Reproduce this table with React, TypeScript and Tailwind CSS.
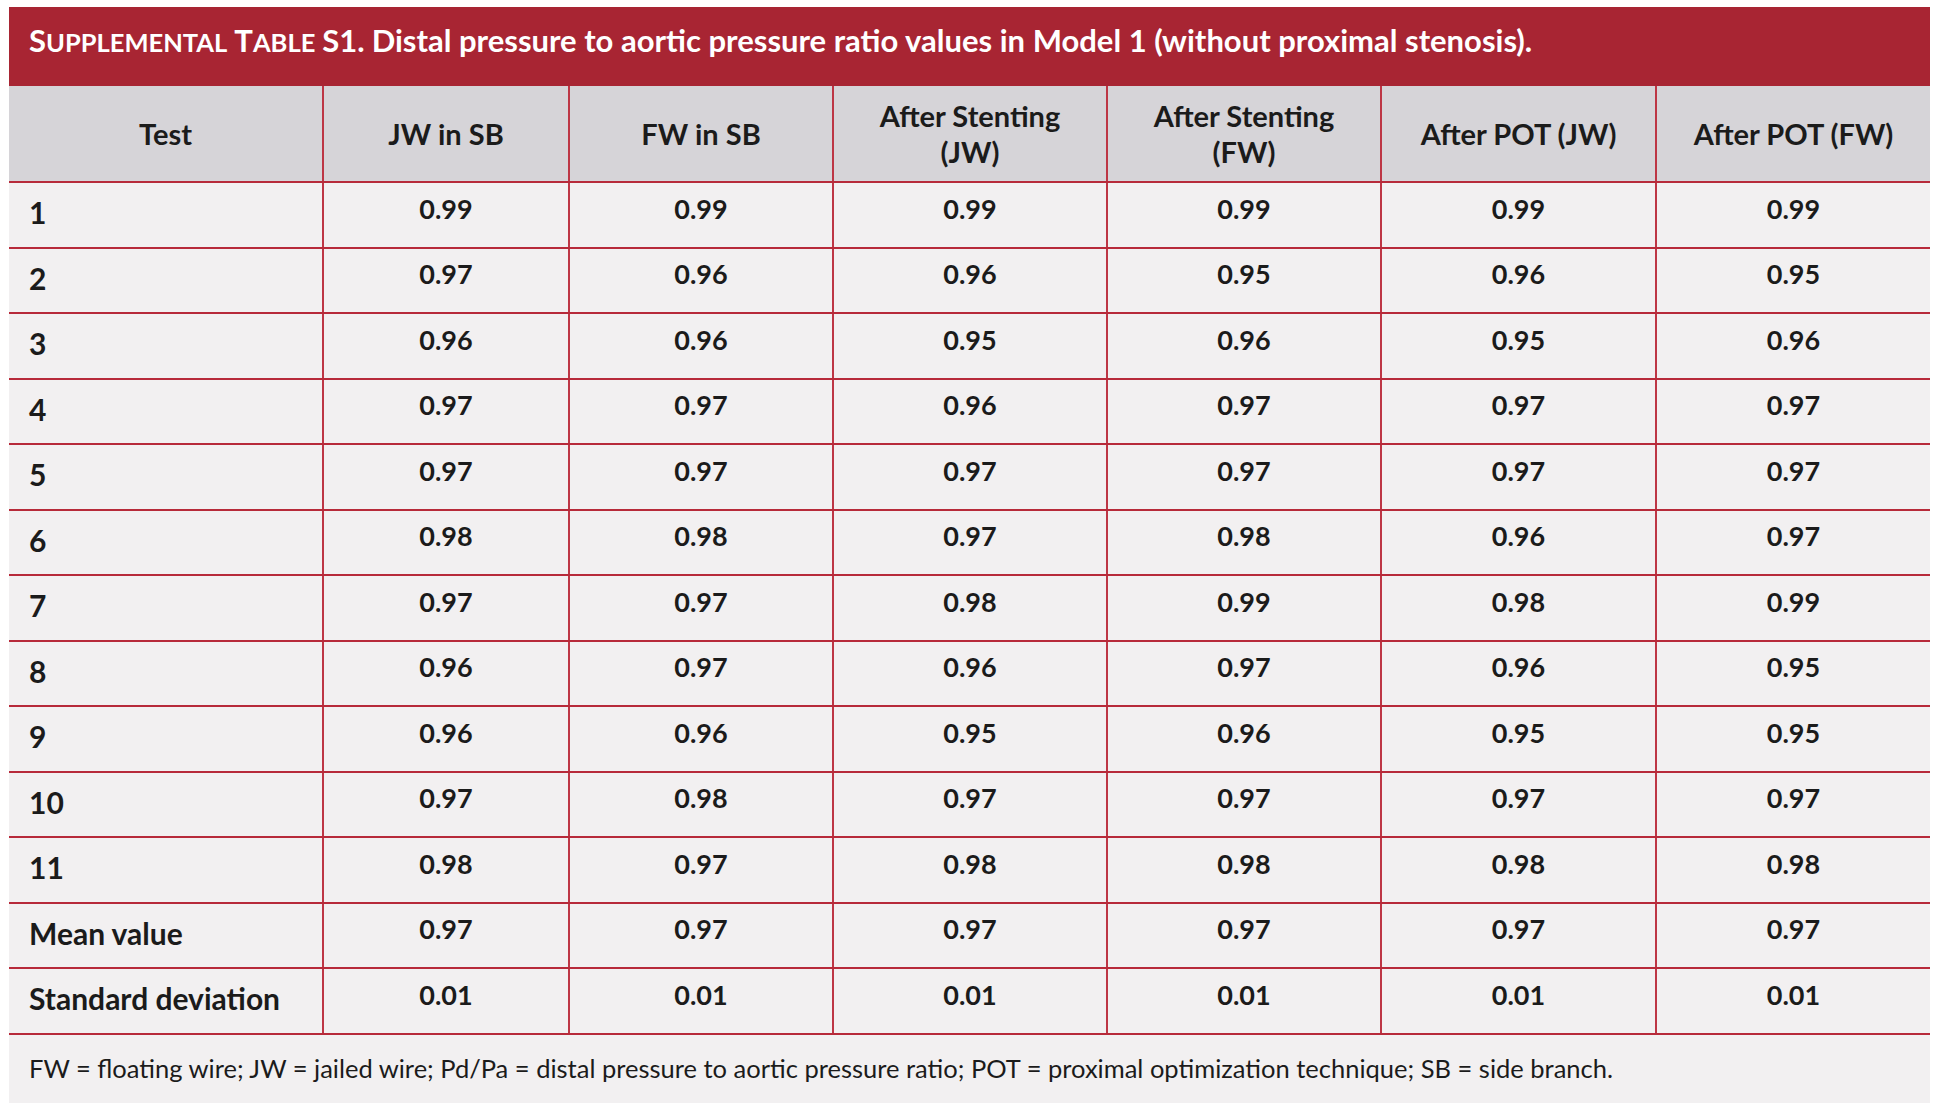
const COLUMNS = [
	"Test",
	"JW in SB",
	"FW in SB",
	"After Stenting (JW)",
	"After Stenting (FW)",
	"After POT (JW)",
	"After POT (FW)",
];

const ROWS: { label: string; values: string[] }[] = [
	{ label: "1", values: ["0.99", "0.99", "0.99", "0.99", "0.99", "0.99"] },
	{ label: "2", values: ["0.97", "0.96", "0.96", "0.95", "0.96", "0.95"] },
	{ label: "3", values: ["0.96", "0.96", "0.95", "0.96", "0.95", "0.96"] },
	{ label: "4", values: ["0.97", "0.97", "0.96", "0.97", "0.97", "0.97"] },
	{ label: "5", values: ["0.97", "0.97", "0.97", "0.97", "0.97", "0.97"] },
	{ label: "6", values: ["0.98", "0.98", "0.97", "0.98", "0.96", "0.97"] },
	{ label: "7", values: ["0.97", "0.97", "0.98", "0.99", "0.98", "0.99"] },
	{ label: "8", values: ["0.96", "0.97", "0.96", "0.97", "0.96", "0.95"] },
	{ label: "9", values: ["0.96", "0.96", "0.95", "0.96", "0.95", "0.95"] },
	{ label: "10", values: ["0.97", "0.98", "0.97", "0.97", "0.97", "0.97"] },
	{ label: "11", values: ["0.98", "0.97", "0.98", "0.98", "0.98", "0.98"] },
	{ label: "Mean value", values: ["0.97", "0.97", "0.97", "0.97", "0.97", "0.97"] },
	{ label: "Standard deviation", values: ["0.01", "0.01", "0.01", "0.01", "0.01", "0.01"] },
];

const GRID = "grid grid-cols-[313px_246px_264px_274px_274px_275px_275px]";

// small caps drawn by hand: first letter full size, rest slightly smaller capitals
function SmallCaps({ word }: { word: string }) {
	return (
		<span>
			{word[0]}
			<span className="text-[25.5px]">{word.slice(1).toUpperCase()}</span>
		</span>
	);
}

export default function App() {
	return (
		<div className="min-h-[1112px] w-[1940px] bg-white pt-[7px] pl-[9px] font-['Lato','Open_Sans',sans-serif] text-[#1b1b1b]">
			<div className="w-[1921px]">
				{/* Title band */}
				<div className="flex h-[79px] items-center bg-[#a82533] pb-[12px] pl-[20px] text-[31px] font-bold text-white">
					<span className="flex items-baseline gap-[7px]">
						<SmallCaps word="Supplemental" />
						<SmallCaps word="Table" />
						<span>S1.</span>
						<span>
							Distal pressure to aortic pressure ratio values in Model 1 (without proximal stenosis).
						</span>
					</span>
				</div>

				{/* Header */}
				<div className={`${GRID} h-[95px] bg-[#d6d4d8]`}>
					{COLUMNS.map((col, i) => (
						<div
							key={col}
							className={`flex items-center justify-center px-[30px] text-center text-[29px] leading-[36px] font-bold ${
								i > 0 ? "border-l-2 border-[#bd3645]" : ""
							}`}
						>
							{col}
						</div>
					))}
				</div>

				{/* Body */}
				{ROWS.map((row) => (
					<div
						key={row.label}
						className={`${GRID} h-[65.5px] border-t-2 border-[#b72a3a] bg-[#f2f0f1]`}
					>
						<div className="flex items-center pb-[4px] pl-[20px] text-[30px] font-bold">
							{row.label}
						</div>
						{row.values.map((v, i) => (
							<div
								key={i}
								className="flex items-center justify-center border-l-2 border-[#bd3645] pb-[12px] text-[27px] font-bold"
							>
								{v}
							</div>
						))}
					</div>
				))}

				{/* Footnote */}
				<div className="flex h-[70px] items-center border-t-2 border-[#b72a3a] bg-[#f2f0f1] pl-[20px] text-[25.5px]">
					FW = floating wire; JW = jailed wire; Pd/Pa = distal pressure to aortic pressure ratio; POT = proximal
					optimization technique; SB = side branch.
				</div>
			</div>
		</div>
	);
}
